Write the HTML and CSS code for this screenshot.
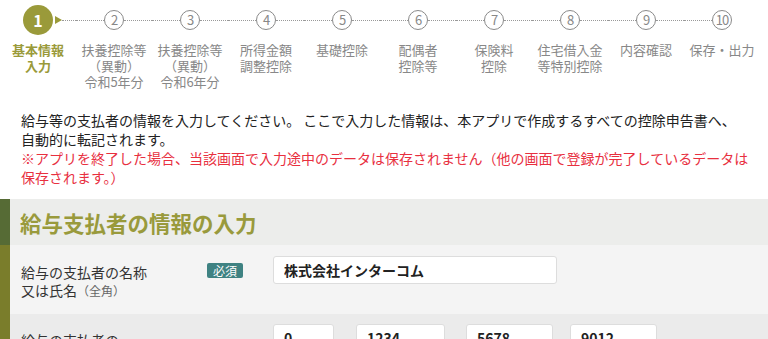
FILE: index.html
```html
<!DOCTYPE html>
<html lang="ja">
<head>
    <meta charset="UTF-8">
    <meta name="viewport" content="width=device-width, initial-scale=1.0">
    <title>基本情報入力</title>
    <link rel="stylesheet" href="styles.css">
</head>
<body>
    <!-- ステップ表示 -->
    <div class="steps">
        <div class="step active">
            <div class="step-head"><span class="blank"></span><span class="num">1</span><span class="tail"><i class="arrow"></i><span class="line"></span></span></div>
            <div class="step-label">基本情報<br>入力</div>
        </div>
        <div class="step">
            <div class="step-head"><span class="line"></span><span class="num">2</span><span class="line"></span></div>
            <div class="step-label">扶養控除等<br>（異動）<br>令和5年分</div>
        </div>
        <div class="step">
            <div class="step-head"><span class="line"></span><span class="num">3</span><span class="line"></span></div>
            <div class="step-label">扶養控除等<br>（異動）<br>令和6年分</div>
        </div>
        <div class="step">
            <div class="step-head"><span class="line"></span><span class="num">4</span><span class="line"></span></div>
            <div class="step-label">所得金額<br>調整控除</div>
        </div>
        <div class="step">
            <div class="step-head"><span class="line"></span><span class="num">5</span><span class="line"></span></div>
            <div class="step-label">基礎控除</div>
        </div>
        <div class="step">
            <div class="step-head"><span class="line"></span><span class="num">6</span><span class="line"></span></div>
            <div class="step-label">配偶者<br>控除等</div>
        </div>
        <div class="step">
            <div class="step-head"><span class="line"></span><span class="num">7</span><span class="line"></span></div>
            <div class="step-label">保険料<br>控除</div>
        </div>
        <div class="step">
            <div class="step-head"><span class="line"></span><span class="num">8</span><span class="line"></span></div>
            <div class="step-label">住宅借入金<br>等特別控除</div>
        </div>
        <div class="step">
            <div class="step-head"><span class="line"></span><span class="num">9</span><span class="line"></span></div>
            <div class="step-label">内容確認</div>
        </div>
        <div class="step">
            <div class="step-head"><span class="line"></span><span class="num">10</span><span class="blank"></span></div>
            <div class="step-label">保存・出力</div>
        </div>
    </div>

    <!-- 説明文 -->
    <div class="intro">
        <p>給与等の支払者の情報を入力してください。 ここで入力した情報は、本アプリで作成するすべての控除申告書へ、<br>自動的に転記されます。</p>
        <p class="warn">※アプリを終了した場合、当該画面で入力途中のデータは保存されません（他の画面で登録が完了しているデータは保存されます。）</p>
    </div>

    <!-- 入力パネル -->
    <section class="panel">
        <div class="panel-head">
            <h2>給与支払者の情報の入力</h2>
        </div>
        <div class="row">
            <div class="row-label">給与の支払者の名称<br>又は氏名<small>（全角）</small></div>
            <span class="badge">必須</span>
            <input class="field name" type="text" value="株式会社インターコム">
        </div>
        <div class="row alt">
            <div class="row-label wide">給与の支払者の<br>法人番号</div>
            <input class="field f1" type="text" value="0">
            <input class="field f2" type="text" value="1234">
            <input class="field f3" type="text" value="5678">
            <input class="field f4" type="text" value="9012">
        </div>
    </section>
</body>
</html>
```

FILE: styles.css
```css
* {
    margin: 0;
    padding: 0;
    box-sizing: border-box;
}

body {
    background: #fff;
    font-family: "Noto Sans CJK JP", sans-serif;
    color: #222;
}

/* ステップ */
.steps {
    display: flex;
    height: 100px;
}

.step {
    width: 76px;
    flex: none;
    text-align: center;
}

.step-head {
    display: flex;
    align-items: center;
    height: 40px;
}

.line,
.blank {
    flex: 1;
    height: 0;
}

.line {
    border-top: 1px dotted #999;
}

.tail {
    flex: 1;
    display: flex;
    align-items: center;
}

.arrow {
    width: 0;
    height: 0;
    margin-left: 2px;
    border-left: 7px solid #9a9a3a;
    border-top: 4px solid transparent;
    border-bottom: 4px solid transparent;
}

.num {
    width: 20px;
    height: 20px;
    border: 1px solid #8a8a8a;
    border-radius: 50%;
    font-size: 13px;
    line-height: 18px;
    color: #888;
    flex: none;
    letter-spacing: -1px;
}

.active .num {
    width: 30px;
    height: 30px;
    border: none;
    background: #9a9a3a;
    color: #fff;
    font-size: 16px;
    font-weight: bold;
    line-height: 30px;
    letter-spacing: 0;
}

.step-label {
    margin-top: 2px;
    font-size: 13px;
    line-height: 16px;
    color: #888;
    white-space: nowrap;
}

.active .step-label {
    color: #9a9a3a;
    font-weight: bold;
}

/* 説明文 */
.intro {
    margin: 11px 0 0 21px;
    width: 730px;
    font-size: 14px;
    line-height: 19px;
}

.intro .warn {
    color: #e8303f;
}

/* パネル */
.panel {
    margin-top: 12px;
}

.panel-head {
    display: flex;
    align-items: center;
    height: 46px;
    padding-left: 10px;
    background: #ecedeb;
    border-left: 10px solid #566b35;
}

.panel-head h2 {
    font-size: 21.5px;
    font-weight: bold;
    color: #999a3c;
}

.row {
    display: flex;
    align-items: flex-start;
    padding: 11px 0 14px 11px;
    background: #f4f4f4;
    border-left: 10px solid #7a7d2b;
}

.row.alt {
    padding-top: 10px;
    background: #ebebeb;
}

.row-label {
    width: 186px;
    margin-top: 7px;
    font-size: 14px;
    line-height: 18px;
    color: #333;
}

.row-label.wide {
    width: 252px;
}

.row-label small {
    font-size: 12px;
    color: #666;
}

.badge {
    width: 36px;
    height: 15px;
    margin: 7px 30px 0 0;
    background: #3f8282;
    border-radius: 2px;
    color: #fff;
    font-size: 12px;
    line-height: 15px;
    text-align: center;
}

.field {
    height: 28px;
    padding-left: 10px;
    border: 1px solid #ddd;
    border-radius: 3px;
    background: #fff;
    font-family: inherit;
    font-size: 14px;
    font-weight: bold;
    color: #222;
    outline: none;
}

.field.name { width: 284px; }
.field.f1 { width: 61px; margin-right: 22px; }
.field.f2 { width: 89px; margin-right: 21px; }
.field.f3 { width: 87px; margin-right: 17px; }
.field.f4 { width: 87px; }
```
